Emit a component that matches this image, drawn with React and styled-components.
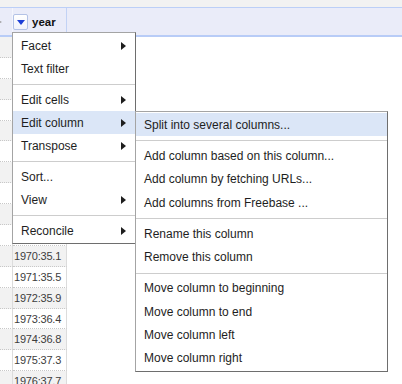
import React from "react";
import styled, { createGlobalStyle } from "styled-components";

const GlobalStyle = createGlobalStyle`
  html, body { margin: 0; padding: 0; background: #fff; }
  body { font-family: "Liberation Sans", Arial, Helvetica, sans-serif; overflow: hidden; }
`;

const Page = styled.div`
  position: relative;
  width: 402px;
  height: 384px;
  overflow: hidden;
  background: #fff;
`;

const TopStrip = styled.div`
  height: 7px;
  background: #f2f2f2;
`;

const HeaderRow = styled.div`
  display: flex;
  height: 27px;
  background: #eaecf9;
  border-top: 1px solid #bccff7;
  border-bottom: 2px solid #b8ccf7;
`;

const HeaderCell = styled.div`
  display: flex;
  align-items: center;
  box-sizing: border-box;
  width: ${(p) => p.$w}px;
  border-right: 1px solid ${(p) => p.$line};
  overflow: hidden;
  gap: 4px;
`;

const CutGlyph = styled.span`
  width: 0;
  height: 0;
  margin-left: -2px;
  border-left: 4px solid #9a9a9a;
  border-top: 2px solid transparent;
  border-bottom: 2px solid transparent;
`;

const DropButton = styled.span`
  display: flex;
  align-items: center;
  justify-content: center;
  box-sizing: border-box;
  width: 15px;
  height: 16px;
  border: 1px solid #b3c2e6;
  border-radius: 2px;
  background: linear-gradient(#ffffff, #f1f3fb);
  &::after {
    content: "";
    width: 0;
    height: 0;
    margin-top: 1px;
    border-top: 5px solid #1d3fd6;
    border-left: 4px solid transparent;
    border-right: 4px solid transparent;
  }
`;

const ColName = styled.span`
  font-size: 11.5px;
  font-weight: bold;
  color: #111;
  margin-top: 1px;
`;

const Row = styled.div`
  display: flex;
  width: 67px;
  height: 20.9px;
  background: ${(p) => (p.$odd ? "#fff" : "#f2f2f2")};
`;

const Cell = styled.div`
  box-sizing: border-box;
  width: ${(p) => p.$w}px;
  height: 100%;
  display: flex;
  align-items: center;
  padding-left: 1px;
  border-right: 1px solid #dcdcdc;
  border-bottom: 1px dotted #c8c8c8;
  font-size: 11px;
  letter-spacing: -0.2px;
  color: #3d3d3d;
  white-space: nowrap;
  overflow: hidden;
`;

const Menu = styled.div`
  position: absolute;
  left: ${(p) => p.$x}px;
  top: ${(p) => p.$y}px;
  width: ${(p) => p.$w}px;
  box-sizing: border-box;
  padding: 1px 0;
  background: #fff;
  border: 1px solid #a4a4a4;
  border-right-color: #6e6e6e;
  border-bottom-color: #6e6e6e;
  font-size: 12px;
  color: #1e1e1e;
`;

const Item = styled.div`
  display: flex;
  align-items: center;
  justify-content: space-between;
  height: ${(p) => p.$h}px;
  padding: 0 9px 0 8px;
  background: ${(p) => (p.$active ? "#dbe6f7" : "transparent")};
  white-space: nowrap;
`;

const Arrow = styled.span`
  width: 0;
  height: 0;
  border-left: 5px solid #1e1e1e;
  border-top: 4px solid transparent;
  border-bottom: 4px solid transparent;
`;

const Separator = styled.div`
  height: 1px;
  margin: 4px 0 3px;
  background: #cdcdcd;
`;

const mainMenu = [
  { label: "Facet", sub: true },
  { label: "Text filter" },
  "sep",
  { label: "Edit cells", sub: true },
  { label: "Edit column", sub: true, active: true },
  { label: "Transpose", sub: true },
  "sep",
  { label: "Sort..." },
  { label: "View", sub: true },
  "sep",
  { label: "Reconcile", sub: true },
];

const subMenu = [
  { label: "Split into several columns...", active: true },
  "sep",
  { label: "Add column based on this column..." },
  { label: "Add column by fetching URLs..." },
  { label: "Add columns from Freebase ..." },
  "sep",
  { label: "Rename this column" },
  { label: "Remove this column" },
  "sep",
  { label: "Move column to beginning" },
  { label: "Move column to end" },
  { label: "Move column left" },
  { label: "Move column right" },
];

const values = [
  "", "", "", "", "", "", "", "", "", "",
  "1970:35.1", "1971:35.5", "1972:35.9", "1973:36.4", "1974:36.8",
  "1975:37.3", "1976:37.7",
];

function MenuList({ items, x, y, w, itemH }) {
  return (
    <Menu $x={x} $y={y} $w={w}>
      {items.map((it, i) =>
        it === "sep" ? (
          <Separator key={i} />
        ) : (
          <Item key={i} $h={itemH} $active={it.active}>
            <span>{it.label}</span>
            {it.sub && <Arrow />}
          </Item>
        )
      )}
    </Menu>
  );
}

export default function App() {
  return (
    <Page>
      <GlobalStyle />
      <TopStrip />
      <HeaderRow>
        <HeaderCell $w={13} $line="#f4f6fd">
          <CutGlyph />
        </HeaderCell>
        <HeaderCell $w={54} $line="#c2d2f5">
          <DropButton />
          <ColName>year</ColName>
        </HeaderCell>
      </HeaderRow>
      {values.map((v, i) => (
        <Row key={i} $odd={i % 2 === 1}>
          <Cell $w={13} />
          <Cell $w={54}>{v}</Cell>
        </Row>
      ))}
      <MenuList items={mainMenu} x={12} y={32} w={124} itemH={23} />
      <MenuList items={subMenu} x={135} y={111} w={253} itemH={23.3} />
    </Page>
  );
}
